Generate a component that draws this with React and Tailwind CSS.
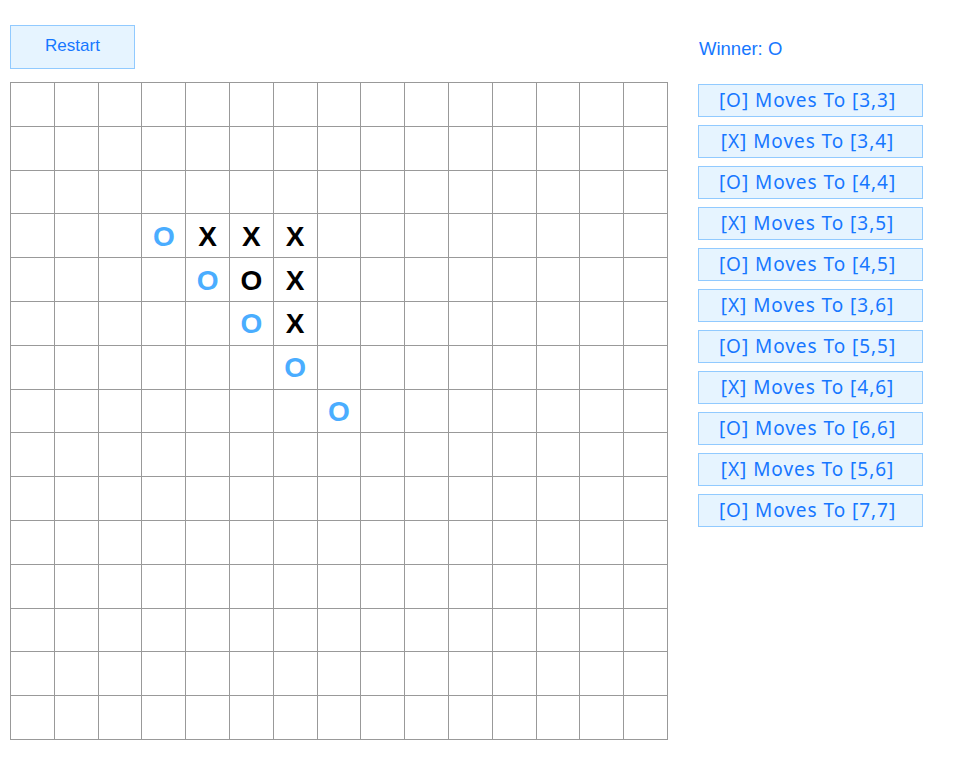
import React from "react";

const moves = [
  ["O", 3, 3],
  ["X", 3, 4],
  ["O", 4, 4],
  ["X", 3, 5],
  ["O", 4, 5],
  ["X", 3, 6],
  ["O", 5, 5],
  ["X", 4, 6],
  ["O", 6, 6],
  ["X", 5, 6],
  ["O", 7, 7],
];

const win = new Set(["3,3", "4,4", "5,5", "6,6", "7,7"]);

export default function App() {
  const board = {};
  moves.forEach(([p, r, c]) => {
    board[`${r},${c}`] = p;
  });
  const cells = [];
  for (let r = 0; r < 15; r++) {
    for (let c = 0; c < 15; c++) {
      const k = `${r},${c}`;
      const v = board[k];
      cells.push(
        <div
          key={k}
          className="h-[43.8px] border-r border-b border-[#999] flex items-center justify-center"
        >
          {v && (
            <span
              className={
                "font-bold text-[28px] leading-none mt-[2px] " +
                (win.has(k) ? "text-[#4aadff]" : "text-black")
              }
            >
              {v}
            </span>
          )}
        </div>
      );
    }
  }
  return (
    <div className="flex bg-white min-h-[763px]" style={{ fontFamily: "Arial, 'Liberation Sans', sans-serif" }}>
      <div className="pl-[10px] pt-[25px]">
        <button className="w-[125px] h-[44px] bg-[#e6f4ff] border border-[#91caff] text-[#1677ff] text-[17px] flex items-center justify-center pb-[2px]">
          Restart
        </button>
        <div className="mt-[13px] w-[658px] grid grid-cols-15 border-l border-t border-[#999]">
          {cells}
        </div>
      </div>
      <div className="ml-[30px] pt-[38px]">
        <div className="text-[18.5px] text-[#1677ff] leading-[22px] pl-[1px]">Winner: O</div>
        <div className="mt-[24px] flex flex-col gap-[8px]">
          {moves.map(([p, r, c], i) => (
            <div
              key={i}
              className="w-[225px] h-[33px] bg-[#e6f4ff] border border-[#91caff] text-[#1677ff] text-[19px] tracking-[0.95px] flex items-center justify-center pr-[6px]"
              style={{ fontFamily: "'Noto Sans', sans-serif" }}
            >
              [{p}] Moves To [{r},{c}]
            </div>
          ))}
        </div>
      </div>
    </div>
  );
}
